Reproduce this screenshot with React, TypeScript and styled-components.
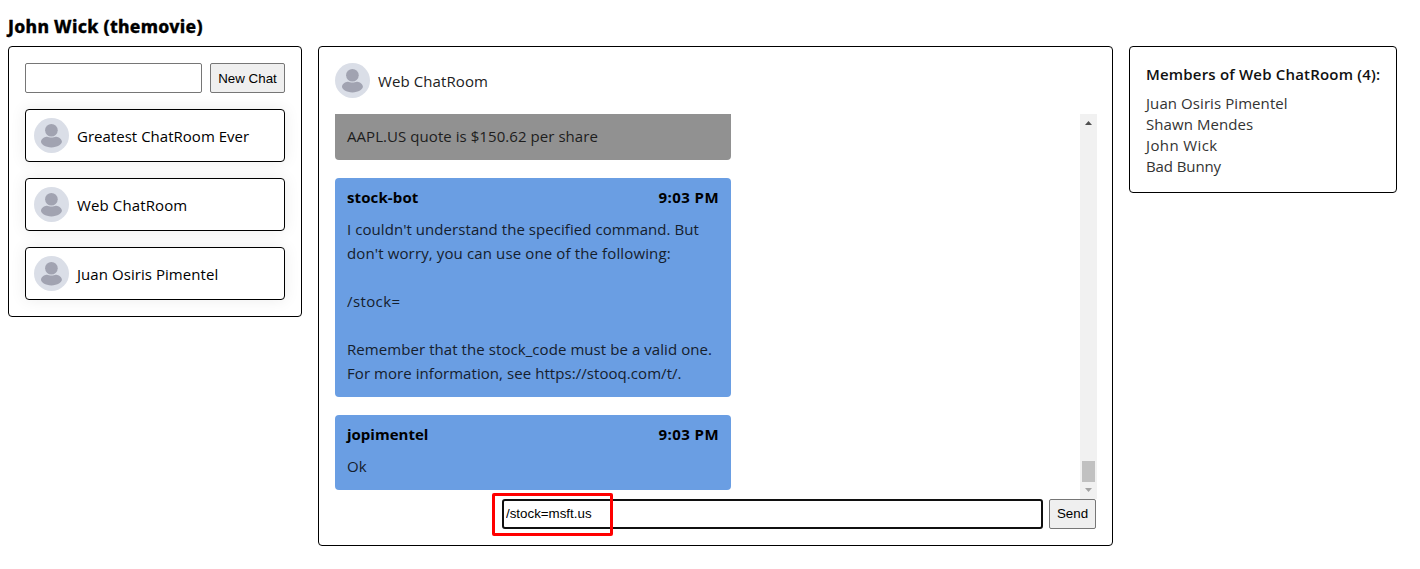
import React from "react";
import styled, { createGlobalStyle } from "styled-components";

const GlobalStyle = createGlobalStyle`
  *, *::before, *::after { box-sizing: border-box; }
  body {
    margin: 0;
    background: #fff;
    color: #000;
    font-family: "Open Sans", "Noto Sans", sans-serif;
    font-size: 15px;
    font-weight: 400;
  }
`;

const Page = styled.main`
  height: 569px;
  padding: 14px 8px 0;
  overflow: hidden;
`;

const UserName = styled.h1`
  margin: 0 0 8px;
  font-family: "Noto Sans", sans-serif;
  font-size: 17.5px;
  line-height: 24px;
  font-weight: 800;
  -webkit-text-stroke: 0.3px #000;
`;

const Columns = styled.div`
  display: flex;
  align-items: flex-start;
  gap: 16px;
`;

const Panel = styled.section<{ $width: number; $height: number }>`
  position: relative;
  display: flex;
  flex-direction: column;
  flex: none;
  width: ${(p) => p.$width}px;
  height: ${(p) => p.$height}px;
  padding: 16px;
  border: 1px solid #000;
  border-radius: 4px;
`;

const Fit = styled.span<{ $spacing?: number }>`
  white-space: pre;
  letter-spacing: ${(p) => p.$spacing ?? 0}px;
`;

const NewChatRow = styled.div`
  display: flex;
  gap: 8px;
  margin-bottom: 16px;
`;

const TextField = styled.input`
  width: 177px;
  height: 30px;
  padding: 0 2px 2px;
  border: 1px solid #767676;
  border-radius: 2px;
  outline: none;
  font: 13.333px "Liberation Sans", Arial, sans-serif;
`;

const MessageField = styled(TextField)`
  width: 541px;
  border: 2px solid #101010;
  border-radius: 3px;
`;

const Button = styled.button<{ $width: number }>`
  width: ${(p) => p.$width}px;
  height: 30px;
  padding: 0;
  border: 1px solid #767676;
  border-radius: 2px;
  background: #efefef;
  color: #000;
  font: 13.333px "Liberation Sans", Arial, sans-serif;
  white-space: nowrap;
`;

const SendButton = styled(Button)`
  padding-bottom: 1px;
`;

const ChatList = styled.div`
  display: flex;
  flex-direction: column;
  gap: 16px;
`;

const ChatCard = styled.div`
  display: flex;
  align-items: center;
  gap: 8px;
  height: 53px;
  padding: 0 8px;
  border: 1px solid #000;
  border-radius: 4px;
  background: #fff;
  box-shadow: 0 0 16px rgba(0, 0, 0, 0.08);
`;

const AvatarSvg = styled.svg`
  flex: none;
  display: block;
  width: 35px;
  height: 35px;
`;

const ChatTitle = styled.div`
  line-height: 24px;
`;

const RoomHeader = styled.header`
  display: flex;
  align-items: center;
  gap: 8px;
  height: 35px;
  margin-bottom: 16px;
  color: #212121;
`;

const MessageArea = styled.div`
  display: flex;
  justify-content: space-between;
  height: 385px;
  margin-right: -1px;
`;

const MessageList = styled.div`
  display: flex;
  flex-direction: column;
  gap: 18px;
  width: 396px;
`;

const Message = styled.article<{ $continued?: boolean }>`
  padding: ${(p) => (p.$continued ? 10 : 7)}px 12px 12px;
  border-radius: ${(p) => (p.$continued ? "0 0 4px 4px" : "4px")};
  background: ${(p) => (p.$continued ? "#919191" : "#6a9ee3")};
  color: ${(p) => (p.$continued ? "#1d1d1d" : "#15202d")};
`;

const MessageHead = styled.div`
  display: flex;
  justify-content: space-between;
  margin-bottom: 8px;
  line-height: 24px;
  font-weight: 700;
  color: #000;
`;

const Line = styled.div`
  height: 24px;
  line-height: 24px;
`;

const ScrollTrack = styled.div`
  display: flex;
  flex-direction: column;
  justify-content: space-between;
  align-items: center;
  width: 17px;
  padding: 7px 0;
  background: #f1f1f1;
`;

const ScrollEnd = styled.div`
  display: flex;
  flex-direction: column;
  align-items: center;
  gap: 6px;
`;

const ScrollThumb = styled.div`
  width: 13px;
  height: 21px;
  background: #c1c1c1;
`;

const ArrowSvg = styled.svg`
  display: block;
  width: 7px;
  height: 4px;
`;

const Composer = styled.form`
  display: flex;
  justify-content: flex-end;
  gap: 6px;
`;

const Highlight = styled.div`
  position: absolute;
  left: 173px;
  top: 446px;
  width: 121px;
  height: 43px;
  border: 3px solid #f00;
  border-radius: 2px;
  pointer-events: none;
`;

const MembersTitle = styled.h2`
  margin: 0 0 8px;
  font-size: 15px;
  line-height: 22px;
  font-weight: 600;
  color: #111;
`;

const Member = styled.div`
  line-height: 21px;
  color: #333;
`;

const Avatar = () => (
  <AvatarSvg viewBox="0 0 35 35">
    <circle cx="17.5" cy="17.5" r="17.5" fill="#dadee7" />
    <circle cx="17.4" cy="12.3" r="6.3" fill="#a1a3b1" />
    <path d="M7 23.6C7.5 20 11.5 18.8 13.2 18.8c1.6 1 6.8 1 8.4 0 1.8 0 5.8 1.2 6.3 4.8.2 2.8-4.4 5.900-10.500 5.900S6.800 26.400 7 23.600Z" fill="#a1a3b1" />
  </AvatarSvg>
);

const chats = [
  { name: "Greatest ChatRoom Ever", spacing: 0.02 },
  { name: "Web ChatRoom", spacing: 0.12 },
  { name: "Juan Osiris Pimentel", spacing: 0.06 },
];

const helpLines = [
  { text: "I couldn't understand the specified command. But", spacing: 0.06 },
  { text: "don't worry, you can use one of the following:", spacing: 0.13 },
  { text: "", spacing: 0 },
  { text: "/stock=", spacing: 0.4 },
  { text: "", spacing: 0 },
  { text: "Remember that the stock_code must be a valid one.", spacing: 0.07 },
  { text: "For more information, see https://stooq.com/t/.", spacing: 0.06 },
];

const members = [
  { name: "Juan Osiris Pimentel", spacing: 0.08 },
  { name: "Shawn Mendes", spacing: 0.08 },
  { name: "John Wick", spacing: 0.4 },
  { name: "Bad Bunny", spacing: -0.1 },
];

export default function App() {
  return (
    <>
      <GlobalStyle />
      <Page>
        <UserName><Fit $spacing={0.3}>John Wick (themovie)</Fit></UserName>
        <Columns>
          <Panel $width={294} $height={271}>
            <NewChatRow>
              <TextField />
              <Button $width={75}>New Chat</Button>
            </NewChatRow>
            <ChatList>
              {chats.map((c) => (
                <ChatCard key={c.name}>
                  <Avatar />
                  <ChatTitle><Fit $spacing={c.spacing}>{c.name}</Fit></ChatTitle>
                </ChatCard>
              ))}
            </ChatList>
          </Panel>

          <Panel $width={795} $height={500}>
            <RoomHeader>
              <Avatar />
              <ChatTitle><Fit $spacing={0.1}>Web ChatRoom</Fit></ChatTitle>
            </RoomHeader>
            <MessageArea>
              <MessageList>
                <Message $continued>
                  <Line><Fit $spacing={0.06}>AAPL.US quote is $150.62 per share</Fit></Line>
                </Message>
                <Message>
                  <MessageHead><Fit $spacing={0.12}>stock-bot</Fit><Fit $spacing={0.45}>9:03 PM</Fit></MessageHead>
                  {helpLines.map((l, i) => (
                    <Line key={i}><Fit $spacing={l.spacing}>{l.text}</Fit></Line>
                  ))}
                </Message>
                <Message>
                  <MessageHead><Fit>jopimentel</Fit><Fit $spacing={0.45}>9:03 PM</Fit></MessageHead>
                  <Line><Fit>Ok</Fit></Line>
                </Message>
              </MessageList>
              <ScrollTrack>
                <ArrowSvg viewBox="0 0 7 4"><path d="M0 4 3.500 0 7 4Z" fill="#505050" /></ArrowSvg>
                <ScrollEnd>
                  <ScrollThumb />
                  <ArrowSvg viewBox="0 0 7 4"><path d="M0 0 3.500 4 7 0Z" fill="#a3a3a3" /></ArrowSvg>
                </ScrollEnd>
              </ScrollTrack>
            </MessageArea>
            <Composer>
              <MessageField defaultValue="/stock=msft.us" />
              <SendButton $width={47} type="button">Send</SendButton>
            </Composer>
            <Highlight />
          </Panel>

          <Panel $width={268} $height={147}>
            <MembersTitle><Fit $spacing={0.19}>Members of Web ChatRoom (4):</Fit></MembersTitle>
            {members.map((m) => (
              <Member key={m.name}><Fit $spacing={m.spacing}>{m.name}</Fit></Member>
            ))}
          </Panel>
        </Columns>
      </Page>
    </>
  );
}
